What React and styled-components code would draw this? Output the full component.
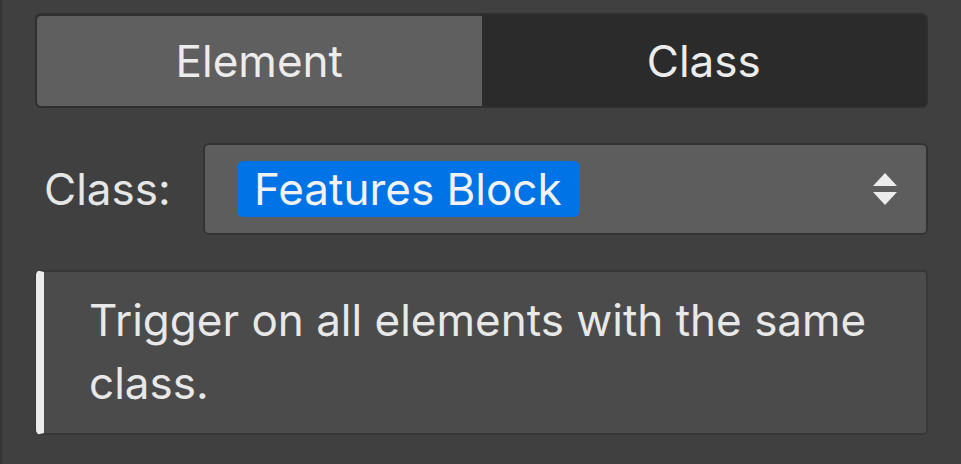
import React from "react";
import styled, { createGlobalStyle } from "styled-components";

const GlobalStyle = createGlobalStyle`
  html, body {
    margin: 0;
    padding: 0;
    background: #404040;
  }
  body {
    font-family: Inter, "Noto Sans", sans-serif;
    -webkit-font-smoothing: antialiased;
  }
`;

const Panel = styled.div`
  box-sizing: border-box;
  width: 961px;
  height: 464px;
  padding: 13px 33px 0 33px;
  border-left: 2px solid #353535;
  display: flex;
  flex-direction: column;
  gap: 35px;
  color: #ebebeb;
  font-size: 44px;
`;

const Segmented = styled.div`
  display: flex;
  height: 95px;
  box-sizing: border-box;
  border: 2px solid #2f2f2f;
  border-radius: 6px;
  overflow: hidden;
  background: #2f2f2f;
`;

const SegButton = styled.div`
  flex: 1;
  display: flex;
  align-items: center;
  justify-content: center;
  background: ${(p) => (p.active ? "#5f5f5f" : "#2b2b2b")};
  border-top: 1px solid ${(p) => (p.active ? "#2f2f2f" : "#2b2b2b")};
  border-radius: ${(p) => (p.active ? "4px 0 0 4px" : "0 4px 4px 0")};
  color: #ececec;
`;

const ClassRow = styled.div`
  display: grid;
  grid-template-columns: 168px 1fr;
  align-items: center;
`;

const Label = styled.span`
  padding-left: 9px;
  color: #e6e6e6;
`;

const Select = styled.div`
  box-sizing: border-box;
  height: 92px;
  display: flex;
  align-items: center;
  justify-content: space-between;
  padding: 0 29px 0 32px;
  background: #5d5d5d;
  border: 2px solid #333;
  border-radius: 6px;
`;

const Pill = styled.span`
  display: inline-flex;
  align-items: center;
  height: 56px;
  padding: 0 18px 0 17px;
  border-radius: 6px;
  background: #0073e6;
  color: #f2f2f2;
`;

const Chevrons = styled.svg`
  display: block;
  flex-shrink: 0;
`;

const Info = styled.div`
  box-sizing: border-box;
  height: 165px;
  margin-left: 1px;
  padding: 17px 40px 0 45px;
  background: #4b4b4b;
  border: 2px solid #373737;
  border-left: 8px solid #ececec;
  border-radius: 5px;
  box-shadow: -1px 0 0 #373737;
  line-height: 63px;
  color: #e8e8e8;
`;

export default function App() {
  return (
    <>
      <GlobalStyle />
      <Panel>
        <Segmented>
          <SegButton active>Element</SegButton>
          <SegButton>Class</SegButton>
        </Segmented>
        <ClassRow>
          <Label>Class:</Label>
          <Select>
            <Pill>Features Block</Pill>
            <Chevrons width="24" height="32" viewBox="0 0 24 32">
              <path d="M12 0 L24 13 L0 13 Z" fill="#ececec" />
              <path d="M0 19 L24 19 L12 32 Z" fill="#ececec" />
            </Chevrons>
          </Select>
        </ClassRow>
        <Info>Trigger on all elements with the same class.</Info>
      </Panel>
    </>
  );
}
